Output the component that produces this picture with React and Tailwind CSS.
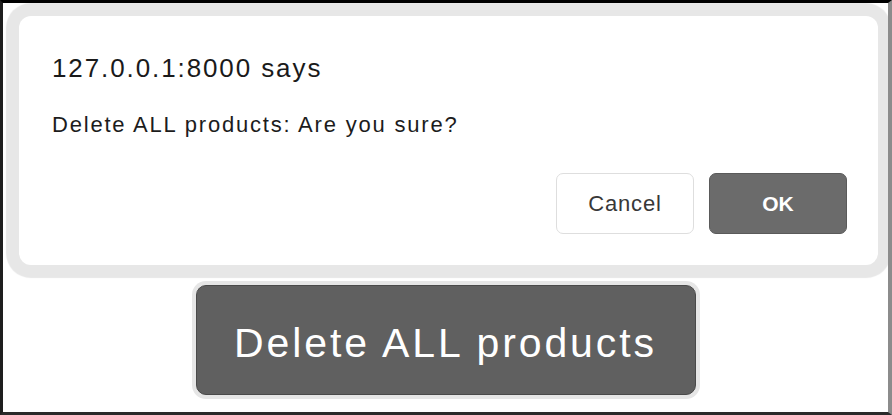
export default function App() {
  return (
    <div className="relative w-[892px] h-[415px] overflow-hidden bg-white border-t-[3px] border-t-black border-l-[3px] border-l-[#1e1e1e] border-r-[4px] border-r-[#8c8c8c] border-b-[3px] border-b-[#2a2a2a] font-['Liberation_Sans',Arial,sans-serif]">
      <div className="flex flex-col items-center pt-[282px]">
        <button className="w-[500px] h-[110px] rounded-[10px] bg-[#606060] border border-[#4a4a4a] shadow-[0_0_0_4px_#e6e6e6] text-white text-[41px] tracking-[2.9px] leading-none flex items-center justify-center pt-[6px]">
          Delete ALL products
        </button>
      </div>

      <div className="absolute left-[16px] top-[13px] w-[859px] h-[249px] rounded-[12px] bg-white shadow-[0_0_1px_13px_#e7e7e7] flex flex-col pt-[39px] pl-[33px] pr-[31px] pb-[31px]">
        <div className="text-[26px] leading-[26px] tracking-[1.9px] text-[#1a1a1a]">127.0.0.1:8000 says</div>
        <div className="mt-[33px] text-[22px] leading-[22px] tracking-[1.8px] text-[#1c1c1c]">Delete ALL products: Are you sure?</div>
        <div className="mt-auto flex justify-end gap-[15px]">
          <button className="w-[138px] h-[61px] rounded-[7px] bg-white border border-[#dedede] text-[22px] tracking-[0.8px] text-[#383838] flex items-center justify-center">
            Cancel
          </button>
          <button className="w-[138px] h-[61px] rounded-[7px] bg-[#6b6b6b] border border-[#5a5a5a] text-[21px] font-bold text-white flex items-center justify-center">
            OK
          </button>
        </div>
      </div>
    </div>
  );
}
